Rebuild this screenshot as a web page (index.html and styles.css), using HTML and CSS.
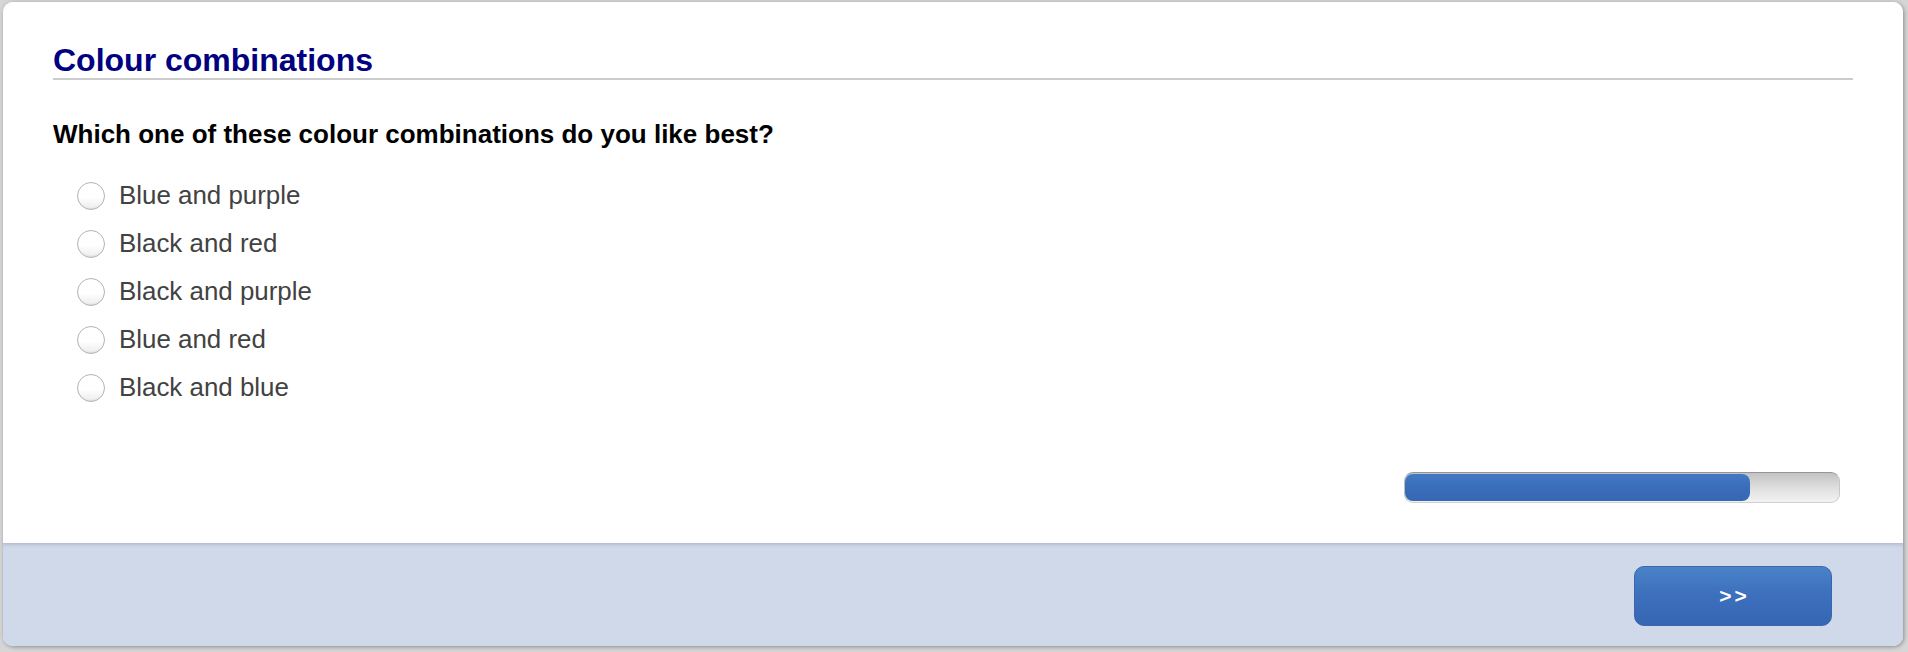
FILE: index.html
```html
<!DOCTYPE html>
<html lang="en">
<head>
<meta charset="utf-8">
<title>Colour combinations</title>
<link rel="stylesheet" href="styles.css">
</head>
<body>
<div class="card">
  <div class="main">
    <h1 class="title">Colour combinations</h1>
    <p class="question">Which one of these colour combinations do you like best?</p>
    <ul class="options">
      <li class="option"><input class="radio" type="radio" name="c" id="o1"><label for="o1">Blue and purple</label></li>
      <li class="option"><input class="radio" type="radio" name="c" id="o2"><label for="o2">Black and red</label></li>
      <li class="option"><input class="radio" type="radio" name="c" id="o3"><label for="o3">Black and purple</label></li>
      <li class="option"><input class="radio" type="radio" name="c" id="o4"><label for="o4">Blue and red</label></li>
      <li class="option"><input class="radio" type="radio" name="c" id="o5"><label for="o5">Black and blue</label></li>
    </ul>
    <div class="progress-row">
      <div class="progress"><div class="progress-fill" style="width:79.5%"></div></div>
    </div>
  </div>
  <div class="footer">
    <button class="next" type="button">&gt;&gt;</button>
  </div>
</div>
</body>
</html>
```
FILE: styles.css
```css
html, body {
  margin: 0;
  padding: 0;
}
body {
  background: #d6d6d6;
  font-family: "Liberation Sans", Arial, Helvetica, sans-serif;
  width: 1908px;
  height: 652px;
  overflow: hidden;
}
.card {
  margin: 2px 0 0 3px;
  width: 1900px;
  height: 644px;
  background: #fff;
  border-radius: 10px;
  overflow: hidden;
  box-shadow: 1px 1px 4px rgba(0, 0, 0, 0.35);
  display: flex;
  flex-direction: column;
}
.main {
  height: 541px;
  box-sizing: border-box;
  padding: 40px 50px 0 50px;
  background: #fff;
}
.title {
  margin: 0;
  font-size: 32px;
  line-height: 36px;
  font-weight: bold;
  color: #000080;
  border-bottom: 2px solid #cccccc;
}
.question {
  margin: 39px 0 0 0;
  font-size: 26px;
  line-height: 30px;
  font-weight: bold;
  color: #000;
}
.options {
  list-style: none;
  margin: 22px 0 0 0;
  padding: 0 0 0 24px;
}
.option {
  height: 48px;
  display: flex;
  align-items: center;
  gap: 14px;
  font-size: 25.9px;
  color: #424242;
}
.option label {
  line-height: 30px;
}
.radio {
  -webkit-appearance: none;
  appearance: none;
  margin: 0;
  width: 28px;
  height: 28px;
  box-sizing: border-box;
  border-radius: 50%;
  border: 1px solid #b4b4b4;
  background: linear-gradient(#ffffff 0%, #ffffff 55%, #ececec 100%);
  box-shadow: inset 0 -1px 1px rgba(0, 0, 0, 0.06);
  flex: none;
  position: relative;
  top: 1px;
}
.progress-row {
  margin-top: 61px;
  display: flex;
  justify-content: flex-end;
  padding-right: 13px;
}
.progress {
  width: 436px;
  height: 31px;
  box-sizing: border-box;
  border-radius: 9px;
  border-top: 1px solid #959595;
  border-left: 1px solid #bdbdbd;
  border-right: 1px solid #c8c8c8;
  border-bottom: 1px solid #d0d0d0;
  background: linear-gradient(#c2c2c2 0%, #dedede 50%, #f3f3f3 100%);
  padding: 1px 0 1px 0;
}
.progress-fill {
  height: 100%;
  border-radius: 8px;
  background: linear-gradient(#4279c5 0%, #3a6dbb 50%, #3567b4 100%);
}
.footer {
  height: 103px;
  box-sizing: border-box;
  background: #cfd9ea;
  box-shadow: inset 0 4px 4px -3px rgba(0, 0, 0, 0.18);
  display: flex;
  justify-content: flex-end;
  align-items: flex-start;
  padding: 23px 71px 0 0;
}
.next {
  width: 198px;
  height: 60px;
  box-sizing: border-box;
  border: 1px solid #3a66ad;
  border-radius: 10px;
  background: linear-gradient(#4a83c9 0%, #3d70bd 45%, #3566b3 100%);
  color: #fff;
  font-family: "Liberation Sans", Arial, Helvetica, sans-serif;
  font-size: 21px;
  font-weight: bold;
  letter-spacing: 3px;
  padding: 0 0 0 3px;
  cursor: pointer;
}
```
